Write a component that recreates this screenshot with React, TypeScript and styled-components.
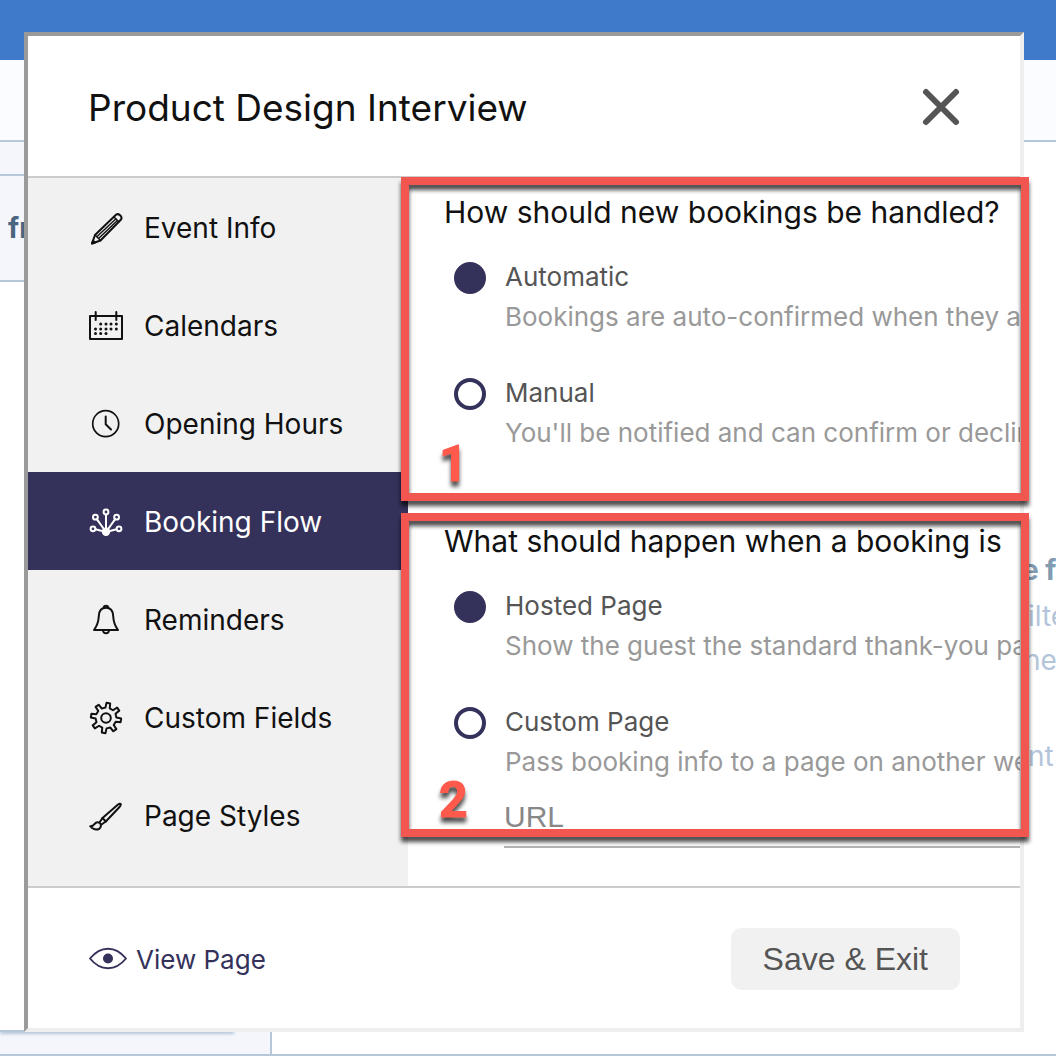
import React, { useState } from "react";
import styled, { createGlobalStyle, css } from "styled-components";

const navy = "#34315b";
const ink = "#111";
const line = "#ccc";
const paleLine = "#b6c7da";
const paleFill = "#f4f6fb";
const sans = `Inter, "Liberation Sans", sans-serif`;
const arial = `"Liberation Sans", Arial, sans-serif`;

const GlobalStyle = createGlobalStyle`
  *, *::before, *::after { box-sizing: border-box; }
  body { margin: 0; background: #fff; font-family: ${sans}; color: ${ink}; }
  button, input { font: inherit; color: inherit; margin: 0; }
  h1, h2, p { margin: 0; font-weight: 400; }
`;

/* ---------- page behind the dialog ---------- */

const Page = styled.div`
  min-height: 100vh;
  padding-bottom: 6px;
  display: flex;
  flex-direction: column;
  overflow: hidden;
`;

const TopBar = styled.header`
  height: 60px;
  background: #3f79c9;
`;

const SubBar = styled.div`
  height: 82px;
  background: #fbfcff;
  border-bottom: 2px solid ${paleLine};
`;

const Columns = styled.div`
  flex: 1;
  display: grid;
  grid-template-columns: 272px minmax(0, 1fr);
  border-bottom: 2px solid ${paleLine};
`;

const ListColumn = styled.div`
  display: flex;
  flex-direction: column;
  background: ${paleFill};
  border-right: 2px solid ${paleLine};
`;

const ListStrip = styled.div`
  height: 34px;
  border-bottom: 2px solid ${paleLine};
`;

const ListHead = styled.div`
  height: 106px;
  padding-left: 8px;
  display: flex;
  align-items: center;
  border-bottom: 2px solid ${paleLine};
  font-size: 28px;
  font-weight: 700;
  color: #4a6580;
`;

const ListBody = styled.div`
  flex: 1;
  margin: 0 36px 22px 0;
  background: #fff;
  border-bottom: 2px solid ${paleLine};
  box-shadow: 0 2px 3px ${paleLine};
`;

const Detail = styled.div`
  display: flex;
  flex-direction: column;
  align-items: flex-end;
  padding-top: 406px;
  overflow: hidden;
`;

const DetailLine = styled.p<{ $strong?: boolean; $gap?: number; $width: number }>`
  width: ${(p) => p.$width}px;
  margin-top: ${(p) => p.$gap ?? 0}px;
  line-height: 44px;
  font-size: 28px;
  white-space: nowrap;
  color: ${(p) => (p.$strong ? "#839cb2" : "#b3c5da")};
  font-weight: ${(p) => (p.$strong ? 700 : 400)};
`;

/* ---------- dialog ---------- */

const Overlay = styled.div`
  position: absolute;
  inset: 0;
  padding: 32px 32px 30px 24px;
`;

const Dialog = styled.div`
  background: #fff;
  border: 4px solid;
  border-color: #9a9a9a #eee #eee #9a9a9a;
`;

const DialogHead = styled.header`
  display: flex;
  align-items: center;
  justify-content: space-between;
  height: 142px;
  padding: 4px 56px 0 60px;
  border-bottom: 2px solid ${line};
`;

const Title = styled.h1`
  font-size: 37px;
  line-height: 48px;
`;

const CloseButton = styled.button`
  display: grid;
  place-items: center;
  width: 46px;
  height: 46px;
  padding: 0;
  border: 0;
  background: none;
  color: #555;
`;

const DialogBody = styled.div`
  position: relative;
  display: grid;
  grid-template-columns: 380px minmax(0, 1fr);
`;

const Nav = styled.nav`
  background: #f1f1f1;
  padding-bottom: 22px;
`;

const NavItem = styled.button<{ $active?: boolean }>`
  display: flex;
  align-items: center;
  gap: 20px;
  width: 100%;
  height: 98px;
  padding: 2px 0 0 60px;
  border: 0;
  background: none;
  font-size: 28px;
  text-align: left;
  ${(p) =>
    p.$active &&
    css`
      background: ${navy};
      color: #fff;
    `}
`;

const Pane = styled.div`
  padding: 14px 0 0 36px;
  overflow: hidden;
`;

const Section = styled.section`
  & + & {
    margin-top: 68px;
  }
`;

const Question = styled.h2`
  margin-bottom: 25px;
  font-size: 30px;
  line-height: 40px;
  white-space: nowrap;
`;

const Options = styled.div`
  display: grid;
  gap: 36px;
  padding-left: 10px;
`;

const Option = styled.label`
  display: grid;
  grid-template-columns: 32px 1fr;
  column-gap: 19px;
  line-height: 40px;
  font-size: 26px;
  white-space: nowrap;
`;

const Radio = styled.input`
  appearance: none;
  width: 32px;
  height: 32px;
  margin-top: 5px;
  border: 4px solid ${navy};
  border-radius: 50%;
  background: #fff;
  &:checked {
    background: ${navy};
  }
`;

const OptionText = styled.span`
  display: grid;
`;

const OptionName = styled.span`
  color: #555;
`;

const OptionHint = styled.span`
  color: #999;
`;

const UrlField = styled.input`
  display: block;
  width: calc(100% - 60px);
  height: 66px;
  margin-left: 60px;
  padding: 6px 0 0;
  border: 0;
  border-bottom: 2px solid #b3b3b3;
  border-radius: 0;
  background: none;
  font-family: ${arial};
  font-size: 30px;
  &::placeholder {
    color: #888;
    opacity: 1;
  }
`;

const DialogFoot = styled.footer`
  display: flex;
  align-items: center;
  justify-content: space-between;
  height: 142px;
  padding: 2px 60px 0;
  border-top: 2px solid ${line};
`;

const ViewLink = styled.a`
  display: flex;
  align-items: center;
  gap: 8px;
  color: ${navy};
  font-size: 26px;
  text-decoration: none;
`;

const SaveButton = styled.button`
  height: 62px;
  padding: 0 32px;
  border: 0;
  border-radius: 10px;
  background: #f1f1f1;
  color: #555;
  font-family: ${arial};
  font-size: 32px;
`;

/* numbered call-out frame laid over part of the dialog */
const Callout = styled.div<{ $top: number }>`
  position: absolute;
  top: ${(p) => p.$top}px;
  left: 373px;
  right: -9px;
  height: 324px;
  display: flex;
  align-items: flex-end;
  padding-left: 30px;
  border: 8px solid #f25650;
  filter: drop-shadow(0 5px 2px rgba(0, 0, 0, 0.7));
  pointer-events: none;
  color: #ff5a4c;
  font: 700 50px/58px Roboto, ${arial};
  -webkit-text-stroke: 1px #ff5a4c;
`;

/* ---------- icons ---------- */

const Icon = ({ children, w = 36, h = 36, sw = 2 }: { children: React.ReactNode; w?: number; h?: number; sw?: number }) => (
  <svg
    width={w}
    height={h}
    viewBox={`0 0 ${w} ${h}`}
    fill="none"
    stroke="currentColor"
    strokeWidth={sw}
    strokeLinecap="round"
    strokeLinejoin="round"
    aria-hidden="true"
  >
    {children}
  </svg>
);

const PencilIcon = () => (
  <Icon>
    <path d="M4 33.5L7 25L28 4.8Q29.8 3.4 31.8 5L32.8 6Q34.3 8 32.8 9.8L12.5 30.5Z" />
    <path d="M7 25L12.5 30.5M26 7L30.8 11.8M8.8 26.8L28 8.8M10.6 28.6L29.4 10.4" strokeWidth="1.4" />
    <path d="M4 33.5L5 30.6L7 32.5Z" fill="currentColor" />
  </Icon>
);

const dots = [
  [12.7, 16], [18, 16], [23, 16], [28.3, 16],
  [7.5, 21], [12.7, 21], [18, 21], [23, 21], [28.3, 21],
  [7.5, 25.6], [12.7, 25.6], [18, 25.6],
];

const CalendarIcon = () => (
  <Icon>
    <rect x="2" y="8" width="32" height="23" />
    <path d="M7.7 4V12M28.3 4V12" />
    <g fill="currentColor" stroke="none">
      {dots.map(([x, y]) => (
        <circle key={`${x}-${y}`} cx={x} cy={y} r="1.5" />
      ))}
    </g>
  </Icon>
);

const ClockIcon = () => (
  <Icon>
    <circle cx="17.7" cy="17.7" r="13" strokeWidth="1.7" />
    <path d="M17.7 10.5V18.3L23 23.5" />
  </Icon>
);

const FlowIcon = () => (
  <Icon>
    <path d="M18 10.5V27M9 15.4L18 28L27 15.4M7.4 25.2L18 28L28.6 25.2" />
    <circle cx="18" cy="27.8" r="3.2" fill="currentColor" />
    <circle cx="18" cy="8" r="2.4" />
    <circle cx="7.4" cy="13.2" r="2.4" />
    <circle cx="28.6" cy="13.2" r="2.4" />
    <circle cx="5" cy="24.8" r="2.4" />
    <circle cx="31" cy="24.8" r="2.4" />
  </Icon>
);

const BellIcon = () => (
  <Icon>
    <path d="M6 28Q10.5 22 10.8 14Q11.2 5.8 18 5.8Q24.8 5.8 25.2 14Q25.5 22 30 28Z" />
    <path d="M15.8 5.2Q16 3.8 18 3.8Q20 3.8 20.2 5.2M15 28.5Q15.3 31.3 18 31.3Q20.7 31.3 21 28.5" />
  </Icon>
);

const gearPath = (() => {
  const at = (r: number, deg: number) => {
    const a = ((deg - 90) * Math.PI) / 180;
    return `${(18 + r * Math.cos(a)).toFixed(2)} ${(18 + r * Math.sin(a)).toFixed(2)}`;
  };
  const points: string[] = [];
  for (let k = 0; k < 8; k++) {
    const c = 9 + k * 45;
    points.push(at(10.4, c - 12), at(15.2, c - 7), at(15.2, c + 7), at(10.4, c + 12));
  }
  return `M${points.join("L")}Z`;
})();

const GearIcon = () => (
  <Icon>
    <path d={gearPath} />
    <circle cx="18" cy="18" r="4.8" />
  </Icon>
);

const BrushIcon = () => (
  <Icon>
    <path d="M11.5 24.5L14.5 20L30 6.5Q32.3 5 32.8 6.2Q33 7.5 31.5 9L17.8 23.5L13.5 26.5" />
    <path d="M14.5 20L17.8 23.5" />
    <path d="M2.2 28.2Q5 28.4 6.5 26Q9.5 22.8 12.3 25.5Q14 28.5 11 31Q6.5 33 2.2 28.2Z" />
  </Icon>
);

const EyeIcon = () => (
  <Icon w={40} h={36} sw={1.9}>
    <path d="M2 17.5Q10 7.7 20 7.7Q30 7.7 38 17.5Q30 27.3 20 27.3Q10 27.3 2 17.5Z" />
    <circle cx="20" cy="17.5" r="5" fill="currentColor" stroke="none" />
  </Icon>
);

const CloseIcon = () => (
  <Icon w={46} h={46} sw={6}>
    <path d="M8 7L38 37M38 7L8 37" />
  </Icon>
);

/* ---------- content ---------- */

const navItems = [
  { name: "Event Info", icon: <PencilIcon /> },
  { name: "Calendars", icon: <CalendarIcon /> },
  { name: "Opening Hours", icon: <ClockIcon /> },
  { name: "Booking Flow", icon: <FlowIcon /> },
  { name: "Reminders", icon: <BellIcon /> },
  { name: "Custom Fields", icon: <GearIcon /> },
  { name: "Page Styles", icon: <BrushIcon /> },
];

const sections = [
  {
    id: "handling",
    question: "How should new bookings be handled?",
    options: [
      { name: "Automatic", hint: "Bookings are auto-confirmed when they a" },
      { name: "Manual", hint: "You'll be notified and can confirm or declin" },
    ],
  },
  {
    id: "after",
    question: "What should happen when a booking is",
    options: [
      { name: "Hosted Page", hint: "Show the guest the standard thank-you pa" },
      { name: "Custom Page", hint: "Pass booking info to a page on another we" },
    ],
  },
];

export default function App() {
  const [tab, setTab] = useState("Booking Flow");
  const [choice, setChoice] = useState<Record<string, string>>({
    handling: "Automatic",
    after: "Hosted Page",
  });

  return (
    <>
      <GlobalStyle />
      <Page>
        <TopBar />
        <SubBar />
        <Columns>
          <ListColumn>
            <ListStrip />
            <ListHead>fr</ListHead>
            <ListBody />
          </ListColumn>
          <Detail>
            <DetailLine $strong $width={34}>e f</DetailLine>
            <DetailLine $width={28} $gap={2}>ilte</DetailLine>
            <DetailLine $width={32}>he</DetailLine>
            <DetailLine $width={28} $gap={52}>nt</DetailLine>
          </Detail>
        </Columns>
      </Page>

      <Overlay>
        <Dialog role="dialog" aria-labelledby="dialog-title">
          <DialogHead>
            <Title id="dialog-title">Product Design Interview</Title>
            <CloseButton type="button" aria-label="Close">
              <CloseIcon />
            </CloseButton>
          </DialogHead>

          <DialogBody>
            <Nav>
              {navItems.map((item) => (
                <NavItem key={item.name} type="button" $active={item.name === tab} onClick={() => setTab(item.name)}>
                  {item.icon}
                  {item.name}
                </NavItem>
              ))}
            </Nav>

            <Pane>
              {sections.map((section) => (
                <Section key={section.id}>
                  <Question>{section.question}</Question>
                  <Options>
                    {section.options.map((option) => (
                      <Option key={option.name}>
                        <Radio
                          type="radio"
                          name={section.id}
                          checked={choice[section.id] === option.name}
                          onChange={() => setChoice({ ...choice, [section.id]: option.name })}
                        />
                        <OptionText>
                          <OptionName>{option.name}</OptionName>
                          <OptionHint>{option.hint}</OptionHint>
                        </OptionText>
                      </Option>
                    ))}
                  </Options>
                </Section>
              ))}
              <UrlField type="url" placeholder="URL" aria-label="URL" />
            </Pane>

            <Callout $top={-1}>1</Callout>
            <Callout $top={335}>2</Callout>
          </DialogBody>

          <DialogFoot>
            <ViewLink href="#view">
              <EyeIcon />
              View Page
            </ViewLink>
            <SaveButton type="button">Save &amp; Exit</SaveButton>
          </DialogFoot>
        </Dialog>
      </Overlay>
    </>
  );
}
